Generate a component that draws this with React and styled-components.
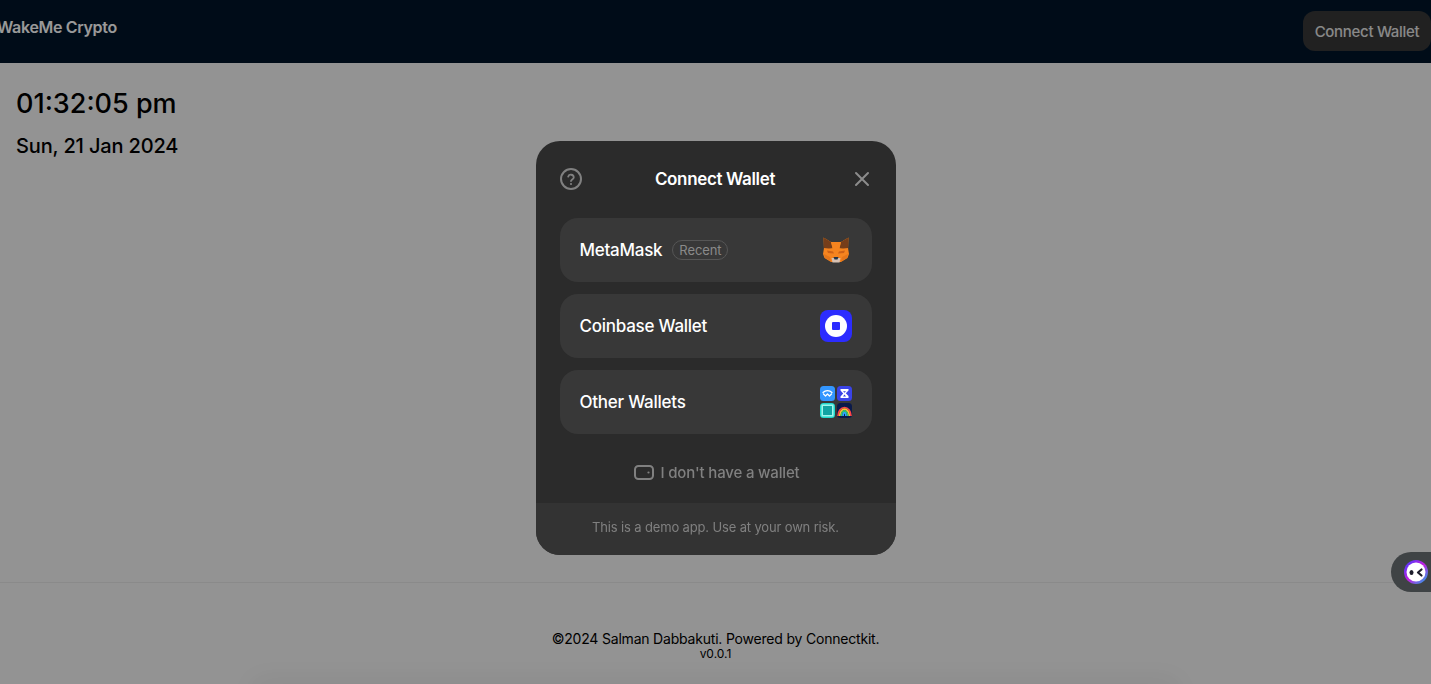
import React from 'react'
import styled, { createGlobalStyle } from 'styled-components'

const GlobalStyle = createGlobalStyle`
  html, body {
    margin: 0;
    padding: 0;
    height: 100%;
    overflow: hidden;
    background: #fff;
    font-family: Inter, "Liberation Sans", sans-serif;
  }
  * { box-sizing: border-box; }
`

function FoxIcon() {
  return (
    <FoxSvg width="26" height="26" viewBox="0 0 26 26">
      <polygon points="0.5,0.5 8,5 18,5 25.5,0.5 25,13 1,13" fill="#e8821e" />
      <polygon points="0.5,0.5 8,5 9.5,11 1,13" fill="#763e1a" />
      <polygon points="25.5,0.5 18,5 16.5,11 25,13" fill="#763e1a" />
      <polygon points="8,5 18,5 16,13 13,16 10,13" fill="#f5841f" />
      <polygon points="1,11 10,12 13,15 16,12 25,11 26,17 24.5,21 18,25 8,25 1.5,21 0,17" fill="#f5841f" />
      <polygon points="4,13.5 10,14.5 11,16.5 5,16" fill="#cd6116" />
      <polygon points="22,13.5 16,14.5 15,16.5 21,16" fill="#cd6116" />
      <polygon points="1,17 7,20 8,24.5 2,21" fill="#e4761b" />
      <polygon points="25,17 19,20 18,24.5 24,21" fill="#e4761b" />
      <polygon points="8.5,21 17.5,21 16.5,25.5 9.5,25.5" fill="#d7c1b3" />
      <polygon points="10.5,20 15.5,20 14.5,22.5 11.5,22.5" fill="#233447" />
    </FoxSvg>
  )
}

function CoinbaseIcon() {
  return (
    <svg width="32" height="32" viewBox="0 0 32 32">
      <rect width="32" height="32" rx="8" fill="#2c2cff" />
      <circle cx="16" cy="16" r="11" fill="#fff" />
      <rect x="12" y="12" width="8" height="8" rx="1" fill="#2c2cff" />
    </svg>
  )
}

function WalletTiles() {
  return (
    <TileGrid>
      <svg width="15" height="15" viewBox="0 0 15 15">
        <rect width="15" height="15" rx="3.5" fill="#3396ff" />
        <path d="M3 6.5c2.5-2.4 6.5-2.4 9 0M3.5 8l2 2 2-2 2 2 2-2" fill="none" stroke="#fff" strokeWidth="1.2" strokeLinecap="round" strokeLinejoin="round" />
      </svg>
      <svg width="15" height="15" viewBox="0 0 15 15">
        <rect width="15" height="15" rx="3.5" fill="#3a43e8" />
        <path d="M3.5 3h8v1.4L8.8 7.2l2.7 2.9V12h-8v-1.4l2.7-3L3.5 4.6z" fill="#fff" />
        <path d="M6 5.2h3L7.5 6.8zM6 10.4h3L7.5 8.6z" fill="#3a43e8" />
      </svg>
      <svg width="15" height="15" viewBox="0 0 15 15">
        <rect width="15" height="15" rx="3.5" fill="#1fd8cc" />
        <rect x="1.5" y="1.5" width="12" height="12" fill="#9ff5ec" />
        <rect x="3" y="3" width="9" height="9" fill="#11a3a3" />
      </svg>
      <svg width="15" height="15" viewBox="0 0 15 15">
        <rect width="15" height="15" rx="3.5" fill="#0b1a4a" />
        <path d="M1 13a6.5 8.5 0 0 1 13 0" fill="none" stroke="#ff4545" strokeWidth="1.7" />
        <path d="M2.7 13a4.8 6.8 0 0 1 9.6 0" fill="none" stroke="#ffc233" strokeWidth="1.7" />
        <path d="M4.4 13a3.1 5.1 0 0 1 6.2 0" fill="none" stroke="#35d16a" strokeWidth="1.7" />
        <path d="M6.1 13a1.4 3.4 0 0 1 2.8 0" fill="none" stroke="#2fa8ff" strokeWidth="1.7" />
      </svg>
    </TileGrid>
  )
}

export default function App() {
  return (
    <>
      <GlobalStyle />
      <Page>
        <Header>
          <Brand>WakeMe Crypto</Brand>
          <HeaderButton>Connect Wallet</HeaderButton>
        </Header>
        <Main>
          <Time>01:32:05 pm</Time>
          <DateText>Sun, 21 Jan 2024</DateText>
        </Main>
        <Footer>
          <Copyright>©2024 Salman Dabbakuti. Powered by Connectkit.</Copyright>
          <Version>v0.0.1</Version>
        </Footer>
      </Page>

      <Overlay>
        <Modal>
          <ModalBody>
            <ModalHead>
              <IconButton aria-label="Help">
                <svg width="22" height="22" viewBox="0 0 22 22" fill="none">
                  <circle cx="11" cy="11" r="10" stroke="#808080" strokeWidth="2" />
                  <path d="M8.2 8.6a2.9 2.9 0 0 1 5.6.7c0 1.9-2.8 2.3-2.8 3.7" stroke="#808080" strokeWidth="1.8" strokeLinecap="round" />
                  <circle cx="11" cy="16" r="1.1" fill="#808080" />
                </svg>
              </IconButton>
              <ModalTitle>Connect Wallet</ModalTitle>
              <CloseButton aria-label="Close">
                <svg width="16" height="16" viewBox="0 0 16 16" fill="none">
                  <path d="M2 2l12 12M14 2L2 14" stroke="#8c8c8c" strokeWidth="2" strokeLinecap="round" />
                </svg>
              </CloseButton>
            </ModalHead>

            <WalletList>
              <WalletRow>
                <WalletName>
                  MetaMask
                  <RecentBadge>Recent</RecentBadge>
                </WalletName>
                <FoxIcon />
              </WalletRow>
              <WalletRow>
                <WalletName>Coinbase Wallet</WalletName>
                <CoinbaseIcon />
              </WalletRow>
              <WalletRow>
                <WalletName>Other Wallets</WalletName>
                <WalletTiles />
              </WalletRow>
            </WalletList>

            <NoWallet>
              <svg width="20" height="15" viewBox="0 0 20 15" fill="none">
                <rect x="1" y="1" width="18" height="13" rx="3.5" stroke="#808080" strokeWidth="2" />
                <circle cx="14.5" cy="7.5" r="1.1" fill="#808080" />
              </svg>
              I don't have a wallet
            </NoWallet>
          </ModalBody>
          <Disclaimer>This is a demo app. Use at your own risk.</Disclaimer>
        </Modal>
      </Overlay>

      <SideBubble>
        <svg width="24" height="24" viewBox="0 0 24 24">
          <defs>
            <linearGradient id="bubbleRing" x1="0" y1="0" x2="1" y2="1">
              <stop offset="0" stopColor="#3a3cff" />
              <stop offset="0.5" stopColor="#c21fe0" />
              <stop offset="1" stopColor="#16b4e8" />
            </linearGradient>
          </defs>
          <circle cx="12" cy="12" r="12" fill="url(#bubbleRing)" />
          <circle cx="12" cy="12" r="9.5" fill="#fff" />
          <ellipse cx="7.5" cy="12.5" rx="2" ry="2.6" fill="#1c1c2b" />
          <path d="M17.5 9.5L14 12.5l3.5 3" fill="none" stroke="#1c1c2b" strokeWidth="2.2" strokeLinecap="round" strokeLinejoin="round" />
        </svg>
      </SideBubble>
    </>
  )
}

const Page = styled.div`
  height: 684px;
  display: flex;
  flex-direction: column;
  background: #f5f5f5;
  overflow: hidden;
`

const Header = styled.header`
  height: 63px;
  flex: none;
  display: flex;
  justify-content: space-between;
  align-items: flex-start;
  background: #001529;
`

const Brand = styled.div`
  margin: 17px 0 0 -3px;
  font-size: 16px;
  line-height: 20px;
  font-weight: 600;
  letter-spacing: -0.33px;
  color: #fff;
`

const HeaderButton = styled.button`
  width: 128px;
  height: 40px;
  margin-top: 11px;
  border: 0;
  border-radius: 12px;
  padding: 0;
  background: #373737;
  color: #e4e4e4;
  font-family: inherit;
  font-size: 15px;
  font-weight: 500;
  letter-spacing: -0.3px;
`

const Main = styled.main`
  flex: 1;
  padding: 23px 16px 0;
  color: #000;
`

const Time = styled.div`
  font-size: 27px;
  line-height: 36px;
  font-weight: 500;
`

const DateText = styled.div`
  margin-top: 10px;
  font-size: 20px;
  line-height: 28px;
  font-weight: 500;
  letter-spacing: -0.15px;
`

const Footer = styled.footer`
  height: 102px;
  flex: none;
  padding-top: 48px;
  border-top: 1px solid #e6e6e6;
  text-align: center;
  color: #000;
`

const Copyright = styled.div`
  font-size: 14px;
  line-height: 16px;
  letter-spacing: -0.2px;
`

const Version = styled.div`
  font-size: 12px;
  line-height: 14px;
`

const Overlay = styled.div`
  position: fixed;
  inset: 0;
  display: flex;
  justify-content: center;
  align-items: center;
  padding-top: 12px;
  background: rgba(0, 0, 0, 0.4);

  &::after {
    content: '';
    position: absolute;
    left: 260px;
    right: 260px;
    bottom: -14px;
    height: 10px;
    box-shadow: 0 0 30px 10px rgba(0, 0, 0, 0.06);
  }
`

const Modal = styled.div`
  width: 360px;
  height: 414px;
  display: flex;
  flex-direction: column;
  border-radius: 24px;
  overflow: hidden;
  background: #2b2b2b;
`

const ModalBody = styled.div`
  flex: 1;
  padding: 24px 24px 0;
`

const ModalHead = styled.div`
  height: 28px;
  display: flex;
  justify-content: space-between;
  align-items: center;
`

const IconButton = styled.button`
  width: 22px;
  height: 22px;
  padding: 0;
  border: 0;
  background: none;
  display: flex;
  align-items: center;
  justify-content: center;
`

const CloseButton = styled(IconButton)`
  margin-right: -2px;
`

const ModalTitle = styled.div`
  margin-right: 3px;
  color: #fff;
  font-size: 17px;
  font-weight: 600;
  letter-spacing: -0.35px;
`

const WalletList = styled.div`
  margin-top: 25px;
  display: flex;
  flex-direction: column;
  gap: 12px;
`

const WalletRow = styled.div`
  height: 64px;
  display: flex;
  justify-content: space-between;
  align-items: center;
  padding: 0 20px;
  border-radius: 18px;
  background: #383838;
`

const WalletName = styled.div`
  display: flex;
  align-items: center;
  gap: 10px;
  color: #fff;
  font-size: 17px;
  font-weight: 500;
  letter-spacing: -0.25px;
`

const RecentBadge = styled.span`
  height: 20px;
  padding: 0 6px;
  border: 1px solid #565656;
  border-radius: 10px;
  color: #8a8a8a;
  font-size: 13px;
  font-weight: 400;
  line-height: 18px;
  letter-spacing: -0.1px;
`

const FoxSvg = styled.svg`
  margin-right: 3px;
`

const TileGrid = styled.div`
  display: grid;
  grid-template-columns: 15px 15px;
  gap: 2px;
  svg { display: block; }
`

const NoWallet = styled.div`
  margin-top: 29px;
  padding-left: 2px;
  display: flex;
  justify-content: center;
  align-items: center;
  gap: 7px;
  color: #808080;
  font-size: 15px;
  font-weight: 500;
  letter-spacing: -0.17px;
`

const Disclaimer = styled.div`
  height: 52px;
  flex: none;
  display: flex;
  justify-content: center;
  align-items: center;
  padding-bottom: 5px;
  background: #333333;
  color: #808080;
  font-size: 13px;
  letter-spacing: -0.15px;
`

const SideBubble = styled.div`
  position: fixed;
  right: 0;
  top: 552px;
  width: 40px;
  height: 40px;
  display: flex;
  align-items: center;
  padding-left: 13px;
  border-radius: 20px 0 0 20px;
  background: #3f4345;
`
